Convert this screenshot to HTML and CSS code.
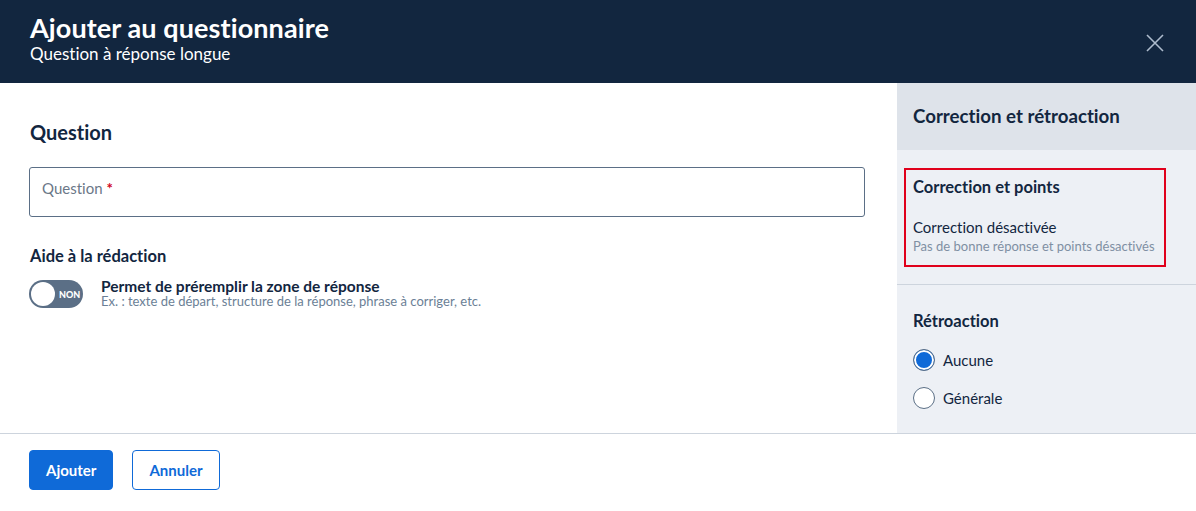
FILE: index.html
```html
<!DOCTYPE html>
<html lang="fr">
  <head>
    <meta charset="UTF-8" />
    <title>Ajouter au questionnaire</title>
    <link rel="stylesheet" href="styles.css">
  </head>
  <body>
    <div class="modal">
      <!-- en-tête -->
      <header class="modal-head">
        <div class="titles">
          <h1>Ajouter au questionnaire</h1>
          <p>Question à réponse longue</p>
        </div>
        <a href="#" class="close" aria-label="Fermer">
          <svg width="18" height="18" viewBox="0 0 18 18">
            <path d="M1 1 L17 17 M17 1 L1 17" stroke="#aebccd" stroke-width="1.6" fill="none" />
          </svg>
        </a>
      </header>

      <div class="modal-body">
        <!-- colonne principale -->
        <main class="main">
          <h2>Question</h2>
          <div class="field">
            <span class="placeholder">Question <b class="req">*</b></span>
          </div>

          <h3>Aide à la rédaction</h3>
          <div class="option">
            <div class="toggle"><span class="knob"></span><span class="toggle-label">NON</span></div>
            <div class="option-text">
              <strong>Permet de préremplir la zone de réponse</strong>
              <small>Ex. : texte de départ, structure de la réponse, phrase à corriger, etc.</small>
            </div>
          </div>
        </main>

        <!-- panneau latéral -->
        <aside class="side">
          <div class="side-head">Correction et rétroaction</div>
          <div class="side-section">
            <div class="points">
              <h4>Correction et points</h4>
              <p class="status">Correction désactivée</p>
              <p class="hint">Pas de bonne réponse et points désactivés</p>
            </div>
          </div>
          <div class="side-section feedback">
            <h4>Rétroaction</h4>
            <label class="radio"><span class="dot checked"></span>Aucune</label>
            <label class="radio"><span class="dot"></span>Générale</label>
          </div>
        </aside>
      </div>

      <footer class="modal-foot">
        <button class="btn primary">Ajouter</button>
        <button class="btn outline">Annuler</button>
      </footer>
    </div>
  </body>
</html>
```

FILE: styles.css
```css
* {
  margin: 0;
  padding: 0;
  box-sizing: border-box;
}
body {
  font-family: "Lato", "Liberation Sans", sans-serif;
  font-variant-ligatures: none;
  color: #12263f;
  background: #fff;
}
.modal {
  width: 1196px;
  height: 511px;
  display: flex;
  flex-direction: column;
}

/* en-tête */
.modal-head {
  height: 83px;
  background-color: #12263f;
  color: #fff;
  display: flex;
  align-items: center;
  justify-content: space-between;
  padding: 0 32px 0 30px;
}
.modal-head h1 {
  font-size: 27px;
  font-weight: 700;
  line-height: 30px;
  margin-top: -6px;
  letter-spacing: 0.1px;
}
.modal-head p {
  font-size: 17px;
  line-height: 22px;
}
.close {
  display: flex;
  margin-top: 2px;
}

/* corps */
.modal-body {
  flex: 1;
  display: flex;
  border-bottom: 1px solid #cdd4dd;
}
.main {
  flex: 1;
  padding: 36px 32px 0 29px;
}
.main h2 {
  font-size: 20px;
  font-weight: 700;
  line-height: 26px;
  margin-left: 1px;
}
.field {
  margin-top: 22px;
  height: 50px;
  border: 1px solid #5b6f86;
  border-radius: 3px;
  padding: 10px 12px;
}
.placeholder {
  font-size: 15px;
  color: #6b7888;
}
.req {
  color: #d0021b;
}
.main h3 {
  margin-top: 29px;
  font-size: 16.5px;
  font-weight: 700;
  line-height: 20px;
  margin-left: 1px;
}
.option {
  display: flex;
  align-items: flex-start;
  gap: 18px;
  margin-top: 12px;
}
.toggle {
  width: 54px;
  height: 28px;
  border-radius: 14px;
  background-color: #5b6f86;
  display: flex;
  align-items: center;
  padding: 2px;
  margin-top: 2px;
}
.knob {
  width: 24px;
  height: 24px;
  border-radius: 50%;
  background: #fff;
}
.toggle-label {
  font-size: 9px;
  font-weight: 900;
  color: #fff;
  margin-left: 4px;
}
.option-text strong {
  display: block;
  font-size: 15.5px;
  line-height: 16px;
}
.option-text small {
  display: block;
  font-size: 13px;
  line-height: 15px;
  color: #6b7f96;
}

/* panneau latéral */
.side {
  width: 299px;
  background-color: #edf0f5;
}
.side-head {
  height: 67px;
  background-color: #dee3ea;
  font-size: 18.7px;
  font-weight: 700;
  line-height: 67px;
  padding-left: 16px;
}
.side-section {
  padding: 18px 30px 17px 7px;
  border-bottom: 1px solid #cdd4dd;
}
.points {
  border: 2px solid #e0001b;
  padding: 7px 8px 10px 7px;
}
.side h4 {
  font-size: 16.5px;
  font-weight: 700;
  line-height: 20px;
}
.status {
  margin-top: 21px;
  font-size: 15px;
  line-height: 18px;
}
.hint {
  margin-top: 1px;
  font-size: 13px;
  line-height: 18px;
  color: #7f8fa3;
}
.feedback {
  border-bottom: none;
  padding: 26px 16px 0 16px;
}
.radio {
  display: flex;
  align-items: center;
  gap: 8px;
  font-size: 15px;
  margin-top: 18px;
  height: 22px;
}
.radio + .radio {
  margin-top: 16px;
}
.dot {
  width: 22px;
  height: 22px;
  border-radius: 50%;
  border: 1px solid #5b6f86;
  background: #fff;
}
.dot.checked {
  background: #0f6ad8;
  box-shadow: inset 0 0 0 2px #fff;
}

/* pied */
.modal-foot {
  height: 77px;
  display: flex;
  align-items: flex-start;
  gap: 19px;
  padding: 16px 29px 0;
}
.btn {
  height: 40px;
  border-radius: 4px;
  font-family: inherit;
  font-size: 15px;
  font-weight: 700;
  padding: 0 16px;
  cursor: pointer;
}
.btn.primary {
  background-color: #0f6ad8;
  border: 1px solid #0f6ad8;
  color: #fff;
}
.btn.outline {
  background: #fff;
  border: 1px solid #0f6ad8;
  color: #0f6ad8;
}
```
